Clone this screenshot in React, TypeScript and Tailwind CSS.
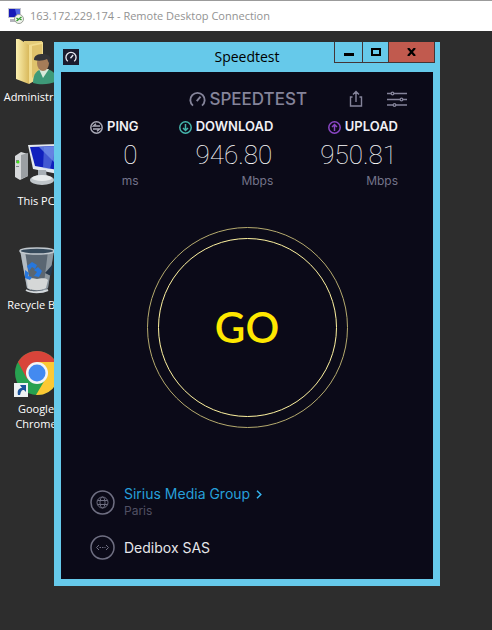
import type { ReactNode } from "react";

type DesktopItem = {
  label: string;
  icon: ReactNode;
};

type MetricProps = {
  label: string;
  value: string;
  unit: string;
  icon: ReactNode;
};

function RemoteIcon() {
  return (
    <svg width="16" height="16" viewBox="0 0 16 16" aria-hidden="true">
      <path d="M0 0h13v10H0z" fill="#c3c5d0" />
      <path d="M1 1h11v8H1z" fill="#1518b8" />
      <path d="M7 1h5v8H9z" fill="#4d62e0" />
      <path d="M2 11h8v3H2z" fill="#b4b4bc" />
      <circle cx="11" cy="11" r="4.5" fill="#f1f3ee" stroke="#9aa096" />
      <path
        d="m8.500 10 2 1.500-2 1.500M13.500 9l-2 1.500 2 1.500"
        fill="none"
        stroke="#2f9a2a"
        strokeWidth="1.300"
      />
    </svg>
  );
}

function GaugeIcon({ size, color }: { size: number; color: string }) {
  return (
    <svg width={size} height={size} viewBox="0 0 18 18" aria-hidden="true">
      <path
        d="M4.200 15.500A7.600 7.600 0 1 1 13.800 15.500"
        fill="none"
        stroke={color}
        strokeWidth="2"
      />
      <path d="m8.200 10.800 4-4.800" stroke={color} strokeWidth="2" />
    </svg>
  );
}

function UserFolderIcon() {
  return (
    <svg width="44" height="48" viewBox="0 0 44 48" aria-hidden="true">
      <defs>
        <linearGradient id="folder" x1="0" x2="1">
          <stop offset="0" stopColor="#fbf0b0" />
          <stop offset="1" stopColor="#d9b95c" />
        </linearGradient>
      </defs>
      <path d="M10 3h18l1 4v35H10z" fill="#e3cb78" />
      <path d="M2 1h3l10 6v39L2 41z" fill="url(#folder)" />
      <path d="M15 7 29 4v34l-14 8z" fill="#f1dc8f" />
      <path d="M18 8 28 6v25l-10 9z" fill="#dfc26b" />
      <path d="M19 45c0-9 4-14 11-14 8 0 12 4 13 12-8 4-17 4-24 2z" fill="#3e9a78" />
      <path d="m25 31 4 9 6-9z" fill="#d9eadb" />
      <ellipse cx="29" cy="25" rx="6" ry="8" fill="#a57c58" />
      <path d="M20 22c0-5 4-6 9-6 7 0 9 4 7 11l-3-6c-4 2-9 2-13 1z" fill="#343438" />
    </svg>
  );
}

function ComputerIcon() {
  return (
    <svg width="44" height="48" viewBox="0 0 44 48" aria-hidden="true">
      <path d="m1 14 6-4 7 2v22l-8 4-5-3z" fill="#d6d8da" />
      <path d="m7 13 7-2v23l-7 3z" fill="#9b9fa3" />
      <path d="M2 18h3v3H2zM2 24h3v1H2z" fill="#7f8488" />
      <circle cx="4" cy="20" r="1.500" fill="#42e51c" />
      <path d="m14 3 30-1v30l-25-5z" fill="#e3e8ee" />
      <path d="m16 5 28-1v24l-23-4z" fill="#1020bd" />
      <path d="m25 5 19-1v20z" fill="#5874dd" />
      <path d="m30 5 12-1-6 23-7-1z" fill="#7390e8" opacity=".5" />
      <path d="M24 28h8l1 9h-9z" fill="#a8afb5" />
      <ellipse cx="28" cy="38" rx="12" ry="5" fill="#bfc5c9" />
      <ellipse cx="28" cy="36" rx="10" ry="3" fill="#e8ebec" />
    </svg>
  );
}

function RecycleIcon() {
  return (
    <svg width="44" height="48" viewBox="0 0 44 48" aria-hidden="true">
      <path d="m6 4 7 38c5 5 17 5 21 0l6-38z" fill="#63717f" opacity=".85" />
      <path d="m6 4 7 38 4 2L11 5z" fill="#b3bbc2" />
      <path d="m40 4-6 38-5 3 5-40z" fill="#8c969e" />
      <ellipse cx="23" cy="5" rx="17" ry="3" fill="#35495b" stroke="#c1c8ce" strokeWidth="1.500" />
      <path d="M13 34c4-3 7-1 10-1s7-2 11 1l-2 8c-5 3-13 3-18 0z" fill="#d5d7d7" />
      <path d="m31 27 8-9-2 12z" fill="#26374a" />
      <path
        d="m13 20 5-4 5 3-2 4-3-2-3 4zM24 21l4 4-3 6-5-1 3-4-3-2zM11 24l4 3-1 3 4 1-2 3-5-2z"
        fill="#2677de"
      />
      <path d="M12 44c5 3 16 3 22 0" fill="none" stroke="#d3d8dc" strokeWidth="2" />
    </svg>
  );
}

function ChromeIcon() {
  return (
    <svg width="44" height="48" viewBox="0 0 44 48" aria-hidden="true">
      <circle cx="23" cy="23" r="22" fill="#27a150" />
      <path d="M4 12a22 22 0 0 1 38 0H23L13 29z" fill="#d8443a" />
      <path d="M23 12h19a22 22 0 0 1-20 33l10-17z" fill="#fcc934" />
      <circle cx="23" cy="23" r="11" fill="#f3f5f7" />
      <circle cx="23" cy="23" r="8.500" fill="#438af0" />
      <path d="M0 33h14v14H0z" fill="#eef1f3" />
      <path d="M4 45c-1-5 1-7 4-7l-2-3h6v7l-2-2c-3 0-3 2-4 5z" fill="#1c549b" />
    </svg>
  );
}

const desktopItems: DesktopItem[] = [
  { label: "Administra...", icon: <UserFolderIcon /> },
  { label: "This PC", icon: <ComputerIcon /> },
  { label: "Recycle Bin", icon: <RecycleIcon /> },
  { label: "Google Chrome", icon: <ChromeIcon /> },
];

function RoundIcon({ color, path }: { color: string; path: string }) {
  return (
    <svg width="13" height="13" viewBox="0 0 13 13" aria-hidden="true" className="shrink-0">
      <g fill="none" stroke={color} strokeWidth="1.500">
        <circle cx="6.500" cy="6.500" r="5.700" />
        <path d={path} />
      </g>
    </svg>
  );
}

function Metric({ label, value, unit, icon }: MetricProps) {
  return (
    <section className="flex flex-col items-end whitespace-nowrap">
      <h2 className="flex h-4 items-center gap-1 text-[13px] font-semibold text-[#f0f0f4]">
        {icon}
        {label}
      </h2>
      <p className="mt-0.5 h-9 pr-px font-[Roboto] text-[26px] leading-9 font-thin text-white">
        {value}
      </p>
      <p className="text-xs leading-4 text-[#74748a]">{unit}</p>
    </section>
  );
}

function SpeedtestWindow() {
  return (
    <main className="absolute top-[11px] right-[52px] left-[54px] bg-[#66c9ea] px-[7px] pb-[7px]">
      <header className="relative flex h-[30px] items-center justify-center">
        <span className="absolute left-0.5 grid size-4 place-items-center bg-[#1b1b2e]">
          <GaugeIcon size={12} color="#e8e8f0" />
        </span>
        <h1 className="font-['Open_Sans'] text-sm leading-5 text-black">Speedtest</h1>
        <div className="absolute top-0 -right-0.5 flex h-[21px] border border-t-0 border-[#443536]">
          <button type="button" aria-label="Minimize" className="grid w-[27px] place-items-center">
            <span className="mt-1 h-[3px] w-2.5 bg-black" />
          </button>
          <button
            type="button"
            aria-label="Maximize"
            className="grid w-[27px] place-items-center border-x border-[#443536]"
          >
            <span className="h-2 w-2.5 border-2 border-black" />
          </button>
          <button type="button" aria-label="Close" className="grid w-[45px] place-items-center bg-[#c15a4e]">
            <svg width="9" height="8" viewBox="0 0 9 8" aria-hidden="true">
              <path d="m1 0 7 8M8 0 1 8" stroke="#000" strokeWidth="2.200" />
            </svg>
          </button>
        </div>
      </header>

      <div className="bg-[#0b0a18] pt-4 pr-[35px] pb-[19px] pl-[29px] font-[Inter]">
        <div className="flex h-[22px] items-center justify-end text-[#85849a]">
          <div className="mr-[42px] flex items-center gap-[3px]">
            <GaugeIcon size={17} color="#85849a" />
            <span className="text-[17px] leading-5 font-medium">SPEEDTEST</span>
          </div>
          <button type="button" aria-label="Share" className="mr-6">
            <svg width="14" height="18" viewBox="0 0 14 18" fill="none" stroke="currentColor" strokeWidth="1.400" aria-hidden="true">
              <path d="M3.500 7h-2v9h11V7h-2M7 12V1.500M4 4.500l3-3 3 3" />
            </svg>
          </button>
          <button type="button" aria-label="Settings" className="-mr-[9px]">
            <svg width="20" height="18" viewBox="0 0 20 18" fill="none" stroke="currentColor" strokeWidth="1.300" aria-hidden="true">
              <path d="M0 3.500h4M7 3.500h13M0 9.500h13M16 9.500h4M0 15h6M9 15h11" />
              <circle cx="5.500" cy="3.500" r="1.300" />
              <circle cx="14.500" cy="9.500" r="1.300" />
              <circle cx="7.500" cy="15" r="1.300" />
            </svg>
          </button>
        </div>

        <div className="mt-[9px] grid grid-cols-[48fr_135fr_125fr]">
          <Metric
            label="PING"
            value="0"
            unit="ms"
            icon={<RoundIcon color="#a9a9b6" path="M10 5H3.500L6 2.800M3 8h6.500L7 10.200" />}
          />
          <Metric
            label="DOWNLOAD"
            value="946.80"
            unit="Mbps"
            icon={<RoundIcon color="#45b5ac" path="M6.500 3v6.500M4 7l2.500 2.500L9 7" />}
          />
          <Metric
            label="UPLOAD"
            value="950.81"
            unit="Mbps"
            icon={<RoundIcon color="#8a46c4" path="M6.500 10V3.500M4 6l2.500-2.500L9 6" />}
          />
        </div>

        <div className="mt-[38px] flex justify-center pl-1.5">
          <div className="grid size-[201px] place-items-center rounded-full border border-[#b5aa6e]">
            <button
              type="button"
              className="size-[179px] rounded-full border border-[#fff3a0] font-[Lato] text-[42px] font-semibold text-[#ffe800]"
            >
              GO
            </button>
          </div>
        </div>

        <div className="mt-[57px] grid gap-4 text-sm">
          <div className="flex items-center gap-[9px]">
            <svg width="25" height="25" viewBox="0 0 25 25" fill="none" stroke="#6f6f82" aria-hidden="true">
              <circle cx="12.500" cy="12.500" r="11.500" strokeWidth="1.500" />
              <circle cx="12.500" cy="12.500" r="5.500" />
              <ellipse cx="12.500" cy="12.500" rx="2.500" ry="5.500" />
              <path d="M7.500 10.500h10M7.500 14.500h10" />
            </svg>
            <div>
              <a href="#servers" className="flex items-center gap-1.5 leading-[18px] text-[#269fd8]">
                Sirius Media Group
                <svg width="6" height="9" viewBox="0 0 6 9" aria-hidden="true">
                  <path d="m1 .7 3.800 3.800L1 8.300" fill="none" stroke="#35b4f0" strokeWidth="1.500" />
                </svg>
              </a>
              <p className="text-xs leading-4 text-[#515063]">Paris</p>
            </div>
          </div>
          <div className="flex items-center gap-[9px] text-[#e6e6ea]">
            <svg width="25" height="25" viewBox="0 0 25 25" fill="none" stroke="#6f6f82" aria-hidden="true">
              <circle cx="12.500" cy="12.500" r="11.500" strokeWidth="1.500" />
              <path d="m9 10-2.500 2.500L9 15M16 10l2.500 2.500L16 15M9.500 12.500h1.500M12 12.500h1.500M14.500 12.500h1" />
            </svg>
            <p className="leading-[18px]">Dedibox SAS</p>
          </div>
        </div>
      </div>
    </main>
  );
}

export default function App() {
  return (
    <div className="flex min-h-screen flex-col bg-[#2d2d2d]">
      <div className="flex h-[31px] items-center gap-1.5 border-t border-[#9b9b9b] bg-white px-2 font-['Open_Sans'] text-[11px] text-[#929292]">
        <RemoteIcon />
        <span>163.172.229.174 - Remote Desktop Connection</span>
      </div>
      <div className="relative flex-1 overflow-hidden">
        <ul className="w-[72px] pt-[7px] font-['Open_Sans'] text-[11px] leading-[15px] text-white">
          {desktopItems.map((item) => (
            <li key={item.label} className="flex h-[104px] flex-col items-center text-center">
              {item.icon}
              <span className="mt-[3px]">{item.label}</span>
            </li>
          ))}
        </ul>
        <SpeedtestWindow />
      </div>
    </div>
  );
}
